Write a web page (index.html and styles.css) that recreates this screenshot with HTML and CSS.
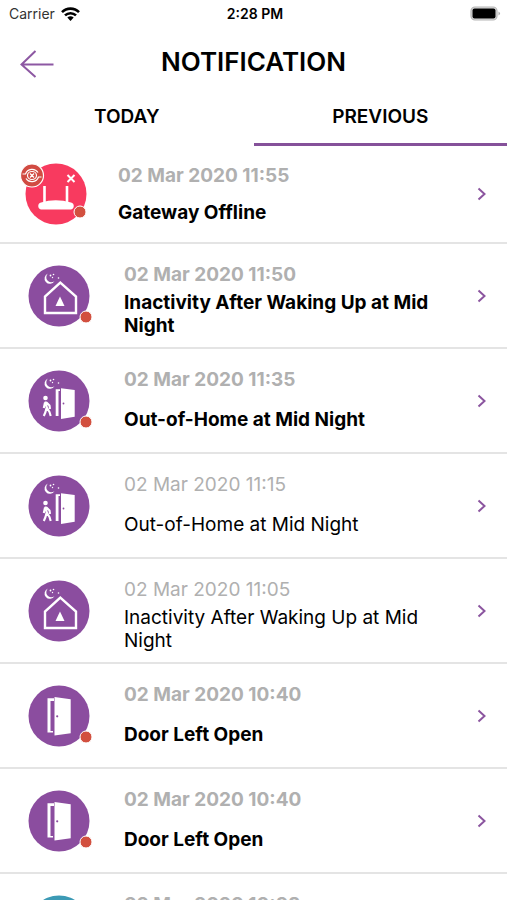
FILE: index.html
```
<!DOCTYPE html>
<html lang="en">
<head>
<meta charset="utf-8">
<meta name="viewport" content="width=device-width, initial-scale=1">
<title>Notification</title>
<link rel="stylesheet" href="styles.css">
</head>
<body>
<svg class="defs" aria-hidden="true">
  <symbol id="moon" viewBox="0 0 76 76">
    <path d="M27 15.500a5.300 5.300 0 1 0 6.500 7.500a4.800 4.800 0 0 1-6.500-7.500z" fill="#fff"/>
    <circle cx="29.500" cy="17.500" r=".9" fill="#fff"/><circle cx="32.500" cy="16.500" r=".8" fill="#fff"/><circle cx="31.500" cy="19.500" r=".7" fill="#fff"/><circle cx="37.500" cy="20" r=".8" fill="#fff"/>
  </symbol>
  <symbol id="house" viewBox="0 0 76 76">
    <circle cx="38" cy="38" r="30.500" fill="#8b4d9f"/>
    <use href="#moon"/>
    <path d="M24 55V38.500L39.300 24.500L55 38.500V55z" fill="none" stroke="#fff" stroke-width="2.400"/>
    <path d="M39 38.500l4.500 9.500h-9z" fill="#fff"/>
  </symbol>
  <symbol id="leaving" viewBox="0 0 76 76">
    <circle cx="38" cy="38" r="30.500" fill="#8b4d9f"/>
    <use href="#moon"/>
    <path d="M34.700 26.300H39V28H37.500V53H34.700z" fill="#fff"/>
    <path d="M40 25.300L53.700 27V53.700L40 56z" fill="#fff"/>
    <circle cx="42.500" cy="40.500" r=".9" fill="#8b4d9f"/>
    <circle cx="24.500" cy="35" r="2.300" fill="#fff"/>
    <path d="M24.500 38.500L26 45.500M24 39.500L22.800 45M25.500 39.500L28.500 42.500L29 46M25.500 45L24.500 49L22.800 53M26 45L28.500 49L29.700 53" fill="none" stroke="#fff" stroke-width="2.100" stroke-linejoin="round"/>
  </symbol>
  <symbol id="door" viewBox="0 0 76 76">
    <circle cx="38" cy="38" r="30.500" fill="#8b4d9f"/>
    <path d="M26.500 20.300H33V23H29.500V53H32V54.500H26.500z" fill="#fff"/>
    <path d="M33.500 19L49.700 21.300V55.300L33.500 57.500z" fill="#fff"/>
    <circle cx="36.200" cy="38.300" r="1.100" fill="#8b4d9f"/>
  </symbol>
  <symbol id="gateway" viewBox="0 0 76 76">
    <circle cx="38" cy="38" r="30.500" fill="#f83a5f"/>
    <path d="M26.500 30V46M49 30V46" stroke="#fff" stroke-width="2.600"/>
    <path d="M23 46.500Q37.500 42 53 46.500A3.600 3.600 0 0 1 53 53.500H23A3.600 3.600 0 0 1 23 46.500z" fill="#fff"/>
    <path d="M49.500 19l7 7m0-7l-7 7" stroke="#fff" stroke-width="2"/>
    <circle cx="14" cy="19.500" r="11.500" fill="#d14b42" stroke="#fff" stroke-width="1.200"/>
    <g fill="none" stroke="#fff" stroke-width="1.200">
      <path d="M4.500 18H7.500A7 7 0 0 1 20 16.500M23.500 21H20.500A7 7 0 0 1 8 22.500"/>
      <path d="M9.500 19.500a4.500 4 0 0 1 9 0a4.500 4 0 0 1-9 0zM12 17.500l4 4m0-4l-4 4"/>
    </g>
  </symbol>
  <symbol id="plain" viewBox="0 0 76 76">
    <circle cx="38" cy="38" r="30.500" fill="#3c9ab5"/>
  </symbol>
  <symbol id="chevron" viewBox="0 0 10 14">
    <path d="M1.500 1.500L7.500 7L1.500 12.500" fill="none" stroke="#8b559f" stroke-width="2"/>
  </symbol>
</svg>

<div class="app">
  <div class="status">
    <div class="carrier">
      <span>Carrier</span>
      <svg width="19" height="14" viewBox="0 0 19 14" aria-hidden="true">
        <g fill="none" stroke="#000" stroke-width="2.600"><path d="M1 5.200A12 12 0 0 1 18 5.200M4 8.400A8 8 0 0 1 15 8.400"/></g>
        <path d="M6.300 10.600A5 5 0 0 1 12.700 10.600L9.500 14z"/>
      </svg>
    </div>
    <span class="clock">2:28 PM</span>
    <svg class="battery" width="31" height="15" viewBox="0 0 31 15" role="img" aria-label="Battery full">
      <rect x="1" y="1" width="26" height="13" rx="4" fill="#ddd" stroke="#b5b5b5" stroke-width="1.200"/>
      <rect x="2.500" y="2.500" width="23" height="10" rx="2"/>
      <path d="M28.500 5.500q3 2 0 4z" fill="#aaa"/>
    </svg>
  </div>

  <header class="header">
    <button class="back" aria-label="Back">
      <svg width="34" height="28" viewBox="0 0 34 28"><path d="M15.500 1L1.500 14.500L15.500 27M1.500 14.500H33.500" fill="none" stroke="#8d58a3" stroke-width="2"/></svg>
    </button>
    <h1>NOTIFICATION</h1>
  </header>

  <nav class="tabs">
    <button class="tab">TODAY</button>
    <button class="tab active" aria-current="page">PREVIOUS</button>
  </nav>

  <main class="list">
    <a class="row alert unread" href="#">
      <svg class="icon" viewBox="0 0 76 76" aria-hidden="true"><use href="#gateway"/><circle class="dot" cx="62" cy="56" r="6"/></svg>
      <span class="text"><time>02 Mar 2020 11:55</time><span class="title">Gateway Offline</span></span>
      <svg class="chevron" aria-hidden="true"><use href="#chevron"/></svg>
    </a>
    <a class="row unread" href="#">
      <svg class="icon" viewBox="0 0 76 76" aria-hidden="true"><use href="#house"/><circle class="dot" cx="65" cy="59" r="6"/></svg>
      <span class="text"><time>02 Mar 2020 11:50</time><span class="title">Inactivity After Waking Up at Mid Night</span></span>
      <svg class="chevron" aria-hidden="true"><use href="#chevron"/></svg>
    </a>
    <a class="row unread" href="#">
      <svg class="icon" viewBox="0 0 76 76" aria-hidden="true"><use href="#leaving"/><circle class="dot" cx="65" cy="59" r="6"/></svg>
      <span class="text"><time>02 Mar 2020 11:35</time><span class="title">Out-of-Home at Mid Night</span></span>
      <svg class="chevron" aria-hidden="true"><use href="#chevron"/></svg>
    </a>
    <a class="row" href="#">
      <svg class="icon" viewBox="0 0 76 76" aria-hidden="true"><use href="#leaving"/></svg>
      <span class="text"><time>02 Mar 2020 11:15</time><span class="title">Out-of-Home at Mid Night</span></span>
      <svg class="chevron" aria-hidden="true"><use href="#chevron"/></svg>
    </a>
    <a class="row" href="#">
      <svg class="icon" viewBox="0 0 76 76" aria-hidden="true"><use href="#house"/></svg>
      <span class="text"><time>02 Mar 2020 11:05</time><span class="title">Inactivity After Waking Up at Mid Night</span></span>
      <svg class="chevron" aria-hidden="true"><use href="#chevron"/></svg>
    </a>
    <a class="row unread" href="#">
      <svg class="icon" viewBox="0 0 76 76" aria-hidden="true"><use href="#door"/><circle class="dot" cx="65" cy="59" r="6"/></svg>
      <span class="text"><time>02 Mar 2020 10:40</time><span class="title">Door Left Open</span></span>
      <svg class="chevron" aria-hidden="true"><use href="#chevron"/></svg>
    </a>
    <a class="row unread" href="#">
      <svg class="icon" viewBox="0 0 76 76" aria-hidden="true"><use href="#door"/><circle class="dot" cx="65" cy="59" r="6"/></svg>
      <span class="text"><time>02 Mar 2020 10:40</time><span class="title">Door Left Open</span></span>
      <svg class="chevron" aria-hidden="true"><use href="#chevron"/></svg>
    </a>
    <a class="row unread" href="#">
      <svg class="icon" viewBox="0 0 76 76" aria-hidden="true"><use href="#plain"/></svg>
      <span class="text"><time>02 Mar 2020 10:38</time><span class="title"></span></span>
      <svg class="chevron" aria-hidden="true"><use href="#chevron"/></svg>
    </a>
  </main>
</div>
</body>
</html>
```
FILE: styles.css
```
* { box-sizing: border-box; }
body {
  margin: 0;
  background: #fff;
  color: #000;
  font-family: Inter, "Liberation Sans", sans-serif;
}
button {
  border: 0;
  padding: 0;
  background: none;
  color: inherit;
  font: inherit;
}
svg { display: block; flex: none; }
.defs { position: absolute; width: 0; height: 0; }
.app {
  display: flex;
  flex-direction: column;
  height: 100vh;
}
.status {
  display: grid;
  grid-template-columns: 1fr auto 1fr;
  align-items: center;
  height: 27px;
  padding: 0 6px 0 9px;
  font-size: 14px;
}
.carrier { display: flex; align-items: center; gap: 6px; color: #333; }
.clock { font-weight: 600; }
.battery { justify-self: end; }
.header {
  display: grid;
  grid-template-columns: 34px 1fr 34px;
  align-items: center;
  height: 70px;
  padding: 0 20px;
}
.back { padding-top: 4px; }
h1 {
  margin: 0;
  font-size: 26px;
  font-weight: 600;
  line-height: 32px;
  text-align: center;
}
.tabs { display: grid; grid-template-columns: 1fr 1fr; }
.tab {
  height: 49px;
  padding-bottom: 8px;
  border-bottom: 3px solid transparent;
  font-size: 19px;
  font-weight: 600;
}
.active { border-color: #85519a; }
.list {
  flex: 1;
  min-height: 0;
  overflow-y: auto;
  scrollbar-width: none;
}
.row {
  display: flex;
  align-items: center;
  gap: 27px;
  padding: 0 20px 0 21px;
  border-bottom: 2px solid #e4e4e4;
  color: inherit;
  text-decoration: none;
  font-size: 19px;
}
.icon { width: 76px; height: 76px; }
.dot { fill: #d2503f; stroke: #fff; stroke-width: 1px; }
.text {
  display: grid;
  flex: 1;
  gap: 4px;
  padding: 19px 0 10px;
}
time { color: #b0b0b0; line-height: 24px; }
.title {
  display: flex;
  align-items: center;
  min-height: 46px;
  line-height: 23px;
}
.unread { font-weight: 700; }
.chevron { width: 10px; height: 14px; }
.alert { gap: 24px; padding-left: 18px; }
.alert .text { gap: 1px; padding: 18px 0 7px; }
```
